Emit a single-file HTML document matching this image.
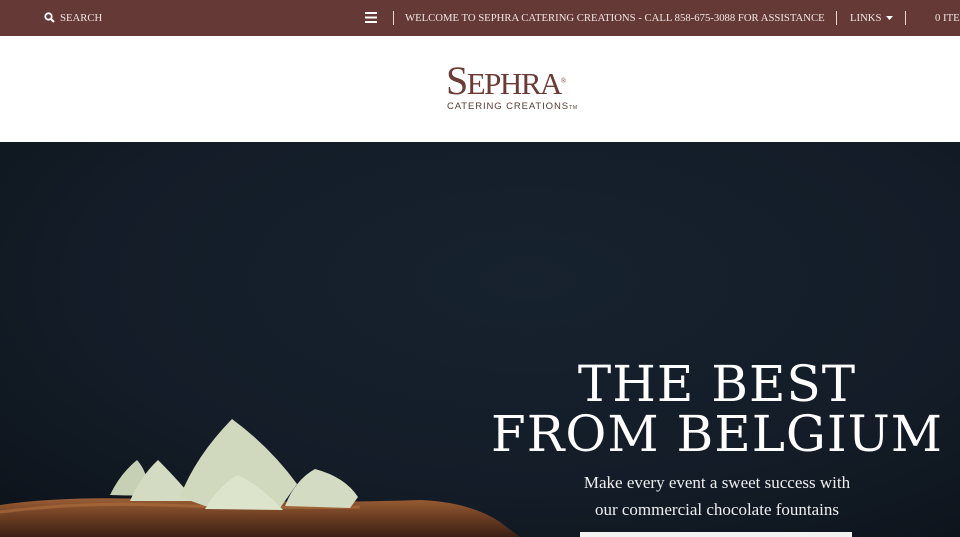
<!DOCTYPE html>
<html><head><meta charset="utf-8"><style>
*{margin:0;padding:0;box-sizing:border-box}
body{width:960px;height:537px;overflow:hidden;background:#fff;font-family:"Liberation Serif",serif}
.top{position:absolute;left:0;top:0;width:960px;height:36px;background:#653a36;color:#f1e6e4;font-size:10.7px;line-height:36px;white-space:nowrap}
.top span{position:absolute;top:0}
.sep{position:absolute;top:11px;width:1px;height:14px;background:#e8d8d5}
.hdr{position:absolute;top:36px;left:0;width:960px;height:106px;background:#fff}
.hero{position:absolute;top:142px;left:0;width:960px;height:395px;background:radial-gradient(ellipse 80% 90% at 55% 35%,#17222f 0%,#131c27 60%,#0c1219 100%);overflow:hidden}
h1{position:absolute;left:470px;width:494px;top:217px;text-align:center;color:#fff;font-family:"DejaVu Serif",serif;font-weight:normal;font-size:50px;line-height:50px;letter-spacing:1px}
.sub{position:absolute;left:520px;width:394px;top:327px;text-align:center;color:#eee;font-size:17px;line-height:27px}
.btn{position:absolute;left:580px;top:390px;width:272px;height:20px;background:#f2f2f2}
</style></head><body>
<div class="top">
<svg style="position:absolute;left:44px;top:12px" width="11" height="11" viewBox="0 0 11 11"><circle cx="4.5" cy="4.5" r="3.2" fill="none" stroke="#fff" stroke-width="1.8"/><path d="M7 7L10 10" stroke="#fff" stroke-width="2"/></svg>
<span style="left:60px">SEARCH</span>
<svg style="position:absolute;left:365px;top:12px" width="12" height="11"><rect y="0" width="12" height="2" fill="#fff"/><rect y="4.5" width="12" height="2" fill="#fff"/><rect y="9" width="12" height="2" fill="#fff"/></svg>
<div class="sep" style="left:393px"></div>
<span style="left:405px">WELCOME TO SEPHRA CATERING CREATIONS - CALL 858-675-3088 FOR ASSISTANCE</span>
<div class="sep" style="left:836px"></div>
<span style="left:850px">LINKS</span>
<svg style="position:absolute;left:886px;top:16px" width="7" height="4"><path d="M0 0H7L3.5 4Z" fill="#fff"/></svg>
<div class="sep" style="left:905px"></div>
<span style="left:935px">0 ITE</span>
</div>
<div class="hdr">
<div style="position:absolute;left:446px;top:28px;font-size:40px;color:#6b3b35;letter-spacing:-1.5px;line-height:34px">S<span style="font-size:31px">EPHRA</span><sup style="font-size:7px;vertical-align:top;letter-spacing:0">®</sup></div>
<div style="position:absolute;left:447px;top:65px;font-family:'Liberation Sans',sans-serif;font-size:9.5px;color:#5a3a36;letter-spacing:0.9px">CATERING CREATIONS<span style="font-size:5px">TM</span></div>
</div>
<div class="hero">
<svg style="position:absolute;left:0;top:260px" width="520" height="135" viewBox="0 0 520 135">
<defs><linearGradient id="g" x1="0" y1="0" x2="0" y2="1"><stop offset="0" stop-color="#9a5e34"/><stop offset="0.5" stop-color="#6a3c22"/><stop offset="1" stop-color="#3a2014"/></linearGradient></defs>
<path d="M0 103 Q60 94 150 97 Q300 102 420 98 Q470 100 500 120 L520 135 L0 135Z" fill="url(#g)"/>
<path d="M0 110 Q80 100 160 103 Q260 107 360 105" stroke="#b07040" stroke-width="3" fill="none" opacity="0.6"/>
<path d="M110 93 Q120 72 137 58 Q148 70 150 94Z" fill="#c6d0b4"/>
<path d="M130 99 Q140 75 158 58 Q180 80 195 99Z" fill="#d3dcc2"/>
<path d="M180 95 Q195 55 232 17 Q270 45 297 82 L280 106 L205 104Z" fill="#d0d9be"/>
<path d="M205 107 Q220 82 238 73 Q262 85 283 108Z" fill="#dde4cc"/>
<path d="M285 104 Q295 78 315 67 Q345 75 358 95 L350 106Z" fill="#d3dbc2"/>
</svg>
<h1>THE BEST<br>FROM BELGIUM</h1>
<div class="sub">Make every event a sweet success with<br>our commercial chocolate fountains</div>
<div class="btn"></div>
</div>
</body></html>
